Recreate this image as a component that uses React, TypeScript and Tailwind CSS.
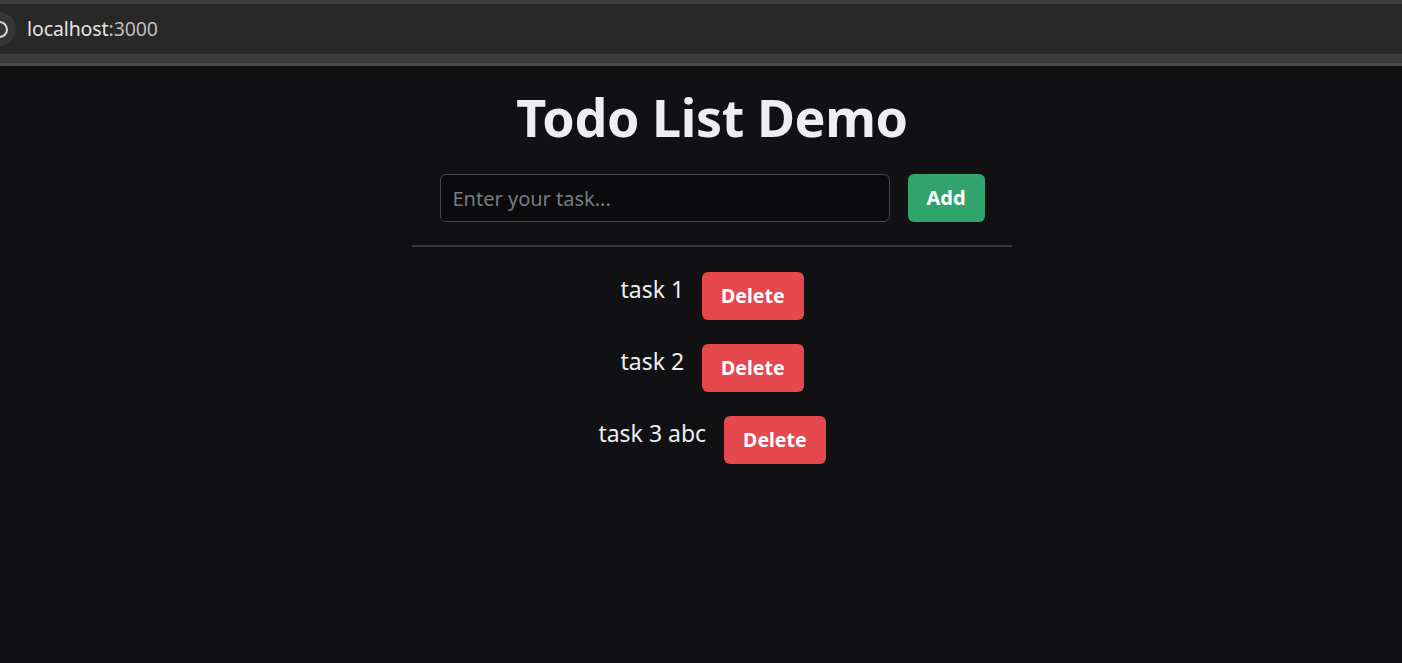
import { useState } from "react";

const initialTasks = ["task 1", "task 2", "task 3 abc"];

export default function App() {
  const [tasks, setTasks] = useState<string[]>(initialTasks);
  const [value, setValue] = useState("");

  const addTask = () => {
    if (!value.trim()) return;
    setTasks([...tasks, value.trim()]);
    setValue("");
  };

  return (
    <div className="min-h-screen bg-[#111113] font-['Noto_Sans',sans-serif]">
      {/* Browser bar */}
      <div className="bg-[#3c3c3c] pt-[4px]">
        <div className="h-[50px] bg-[#282828] flex items-center overflow-hidden">
          <div className="-ml-[18px] w-[34px] h-[34px] rounded-full bg-[#363636] flex items-center justify-center shrink-0">
            <div className="w-[17px] h-[17px] rounded-full border-2 border-[#d8d8d8]" />
          </div>
          <span className="ml-[11px] text-[19.5px] text-[#e3e3e3] tracking-[-0.1px]">
            localhost<span className="text-[#bdbdbd]">:3000</span>
          </span>
        </div>
        <div className="h-[9px] bg-[#3c3c3c]" />
        <div className="h-[3px] bg-[#4a4a4a]" />
      </div>

      {/* Content */}
      <div className="flex justify-center pl-[22px]">
        <div className="w-[600px] flex flex-col items-center">
          <h1 className="mt-[20px] text-[52px] leading-[62px] font-bold text-[#edeef0] tracking-[-0.4px]">
            Todo List Demo
          </h1>

          <div className="mt-[26px] flex items-center gap-[18px]">
            <input
              value={value}
              onChange={(e) => setValue(e.target.value)}
              placeholder="Enter your task..."
              className="w-[450px] h-[48px] rounded-[6px] border border-[#45464b] bg-[#0b0b0d] px-[12px] text-[20px] text-[#edeef0] placeholder:text-[#777b82] outline-none"
            />
            <button
              onClick={addTask}
              className="h-[48px] w-[77px] rounded-[6px] bg-[#30a46c] text-white text-[20px] font-bold"
            >
              Add
            </button>
          </div>

          <hr className="mt-[23px] w-[600px] border-0 h-[2px] bg-[#3a3b3f]" />

          <ul className="mt-[25px] flex flex-col items-center gap-[24px]">
            {tasks.map((t, i) => (
              <li key={i} className="flex items-start gap-[18px]">
                <span className="text-[23px] leading-[34px] text-[#edeef0]">{t}</span>
                <button
                  onClick={() => setTasks(tasks.filter((_, j) => j !== i))}
                  className="h-[48px] px-[19px] rounded-[6px] bg-[#e5484d] text-white text-[19.5px] font-bold"
                >
                  Delete
                </button>
              </li>
            ))}
          </ul>
        </div>
      </div>
    </div>
  );
}
